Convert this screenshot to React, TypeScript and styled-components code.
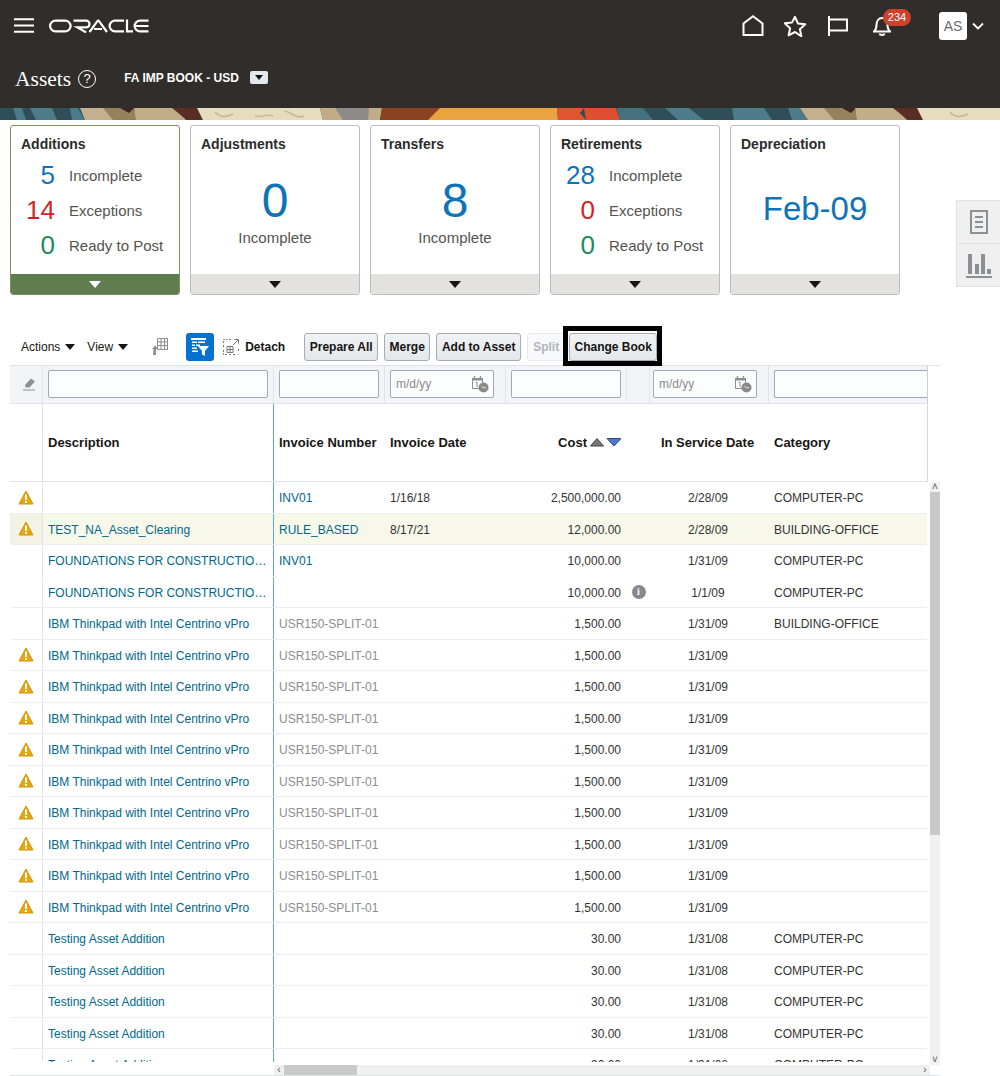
import React from 'react';
import { styled, createGlobalStyle } from 'styled-components';

const GRID = '33px 231px 111px 121px 121px 23px 119px 1fr';
const LINK = '#00688c';

type RowData = {
  warn?: boolean;
  desc: string;
  invoice?: string;
  muted?: boolean;
  date?: string;
  cost: string;
  info?: boolean;
  service: string;
  category?: string;
  selected?: boolean;
  noLine?: boolean;
};

const IBM = 'IBM Thinkpad with Intel Centrino vPro';
const FND = 'FOUNDATIONS FOR CONSTRUCTIO…';
const ibmRow: RowData = { warn: true, desc: IBM, invoice: 'USR150-SPLIT-01', muted: true, cost: '1,500.00', service: '1/31/09' };
const testRow: RowData = { desc: 'Testing Asset Addition', cost: '30.00', service: '1/31/08', category: 'COMPUTER-PC' };

const rows: RowData[] = [
  { warn: true, desc: '', invoice: 'INV01', date: '1/16/18', cost: '2,500,000.00', service: '2/28/09', category: 'COMPUTER-PC' },
  { warn: true, desc: 'TEST_NA_Asset_Clearing', invoice: 'RULE_BASED', date: '8/17/21', cost: '12,000.00', service: '2/28/09', category: 'BUILDING-OFFICE', selected: true },
  { desc: FND, invoice: 'INV01', cost: '10,000.00', service: '1/31/09', category: 'COMPUTER-PC', noLine: true },
  { desc: FND, cost: '10,000.00', info: true, service: '1/1/09', category: 'COMPUTER-PC' },
  { ...ibmRow, warn: false, category: 'BUILDING-OFFICE' },
  ibmRow, ibmRow, ibmRow, ibmRow, ibmRow, ibmRow, ibmRow, ibmRow, ibmRow,
  testRow, testRow, testRow, testRow, testRow,
];

function Warning() {
  return (
    <svg width="16" height="15" viewBox="0 0 16 15">
      <path d="M8 1 15 14H1Z" fill="#e8a70c" stroke="#d19500" strokeLinejoin="round" />
      <rect x="7" y="4.5" width="2" height="5.5" fill="#fff" />
      <rect x="7" y="11" width="2" height="2" fill="#fff" />
    </svg>
  );
}

function CalendarClock() {
  return (
    <svg width="18" height="18" viewBox="0 0 18 18">
      <path d="M1.5 3.5h10v10h-10z" fill="#fff" stroke="#8f8f8f" />
      <path d="M1 3h11v2.5H1z" fill="#8f8f8f" />
      <path d="M3.5 1v2M9.5 1v2" stroke="#8f8f8f" strokeWidth="1.4" />
      <path d="M4.5 7.5 6 7v5" fill="none" stroke="#8f8f8f" />
      <circle cx="12.5" cy="12.5" r="5" fill="#8a8a8a" />
      <path d="M10.500 11.500l2 1.200h2.500" fill="none" stroke="#e8e8e8" />
    </svg>
  );
}

function SummaryCard({ title, active, children }: { title: string; active?: boolean; children: React.ReactNode }) {
  return (
    <Card $active={active}>
      <CardTitle>{title}</CardTitle>
      <CardBody>{children}</CardBody>
      <CardFooter $active={active}>
        <Caret $active={active} />
      </CardFooter>
    </Card>
  );
}

function Stat({ value, label, color }: { value: number; label: string; color: string }) {
  return (
    <StatRow>
      <StatValue $color={color}>{value}</StatValue>
      <StatLabel>{label}</StatLabel>
    </StatRow>
  );
}

export default function App() {
  return (
    <>
      <GlobalStyle />
      <Header>
        <TopBar>
          <svg width="20" height="15" viewBox="0 0 20 15">
            <path d="M0 1.2h20M0 7.5h20M0 13.8h20" stroke="#fff" strokeWidth="2" />
          </svg>
          <Logo width="100" height="14" viewBox="0 0 100 14" role="img" aria-label="Oracle" fill="none" stroke="#fff" strokeWidth="2.2">
            <rect x="1.1" y="1.6" width="20.5" height="10.8" rx="5.4" />
            <path d="M24.5 1.6h12.6a3.3 3.3 0 0 1 0 6.8H28.4l8.8 5" />
            <path d="M40.5 13 48.2 2.4q1-1.4 2 0L58 13M45 10h8" />
            <path d="M75 1.6H66a5.4 5.4 0 0 0 0 10.8h9" />
            <path d="M78 .5V12.4h6" />
            <path d="M99.5 1.6H91a5.4 5.4 0 0 0 0 10.8h8.5M86.500 7h13" />
          </Logo>
          <NavIcons>
            <svg width="22" height="21" viewBox="0 0 22 21" fill="none" stroke="#fff" strokeWidth="2">
              <path d="M1.500 20V8.500L11 1.300l9.500 7.200V20z" />
            </svg>
            <svg width="24" height="22" viewBox="1 0 24 22" fill="none" stroke="#fff" strokeWidth="2" strokeLinejoin="round">
              <path d="m12 1.800 3 6.700 7.300.8-5.400 4.900 1.500 7.100L12 17l-6.400 3.300 1.500-7.100-5.400-4.900 7.300-.8z" />
            </svg>
            <svg width="20" height="20" viewBox="0 0 20 20" fill="none" stroke="#fff" strokeWidth="2">
              <path d="M1 0v20M1 3.500h18v11H1" />
            </svg>
            <BellWrap>
              <svg width="18" height="20" viewBox="0 0 18 20" fill="none" stroke="#fff" strokeWidth="2">
                <path d="M1 15.500h16c-2-1.500-2.500-3-2.500-6.500 0-4-2.300-7-5.500-7S3.500 5 3.500 9c0 3.500-.5 5-2.500 6.500z" />
                <path d="M6.500 17.500c.5 2 4.500 2 5 0" />
              </svg>
              <Badge>234</Badge>
            </BellWrap>
          </NavIcons>
          <Avatar>AS</Avatar>
          <svg width="12" height="8" viewBox="0 0 12 8" fill="none" stroke="#fff" strokeWidth="1.800">
            <path d="m1 1.500 5 5 5-5" />
          </svg>
        </TopBar>
        <TitleBar>
          <PageTitle>Assets</PageTitle>
          <HelpIcon>?</HelpIcon>
          <BookName>FA IMP BOOK - USD</BookName>
          <BookButton>
            <svg width="8" height="5" viewBox="0 0 8 5">
              <path d="M0 0h8L4 5z" fill="#111" />
            </svg>
          </BookButton>
        </TitleBar>
      </Header>

      <Banner viewBox="0 0 1000 12" preserveAspectRatio="none">
        <rect width="1000" height="12" fill="#2f4e57" />
        <path d="M13 0h9l4 12h-9zM30 0h22l5 12H36zM70 0h8l7 12H72z" fill="#4d7b89" />
        <path d="M80 0h45l10 12H85z" fill="#c4b08e" />
        <path d="M103 0h30l5 12h-25z" fill="#97815c" />
        <path d="M120 0h14l-5 5z" fill="#3a2723" />
        <path d="M134 0h40l12 12h-50z" fill="#c3ad86" />
        <path d="M172 0h25l5 12h-15z" fill="#5a2d25" />
        <path d="M197 0h123l3 12H203z" fill="#e6dcc0" />
        <path d="M215 4c5 6 12 5 18 2M255 8c10 2 12-3 18 0M285 3c8 2 10 8 19 5" stroke="#c4b594" strokeWidth="1.500" fill="none" />
        <path d="M320 0h62l-2 12h-57z" fill="#c2ac85" />
        <path d="M335 0h34l-1 12h-25z" fill="#8d8a88" />
        <path d="M382 0h60l-12 12h-50z" fill="#8a4220" />
        <path d="M440 0h117l1 12H428z" fill="#eaa33f" />
        <path d="M557 0h27l-4 5 6 7h-28z" fill="#e0552f" />
        <path d="M584 0h32l4 12h-34z" fill="#dd4f2e" />
        <path d="M617 0h26l10 12h-33z" fill="#45707e" />
        <path d="M665 0h24l15 12h-26zM732 0h32l8 12h-38zM788 0h12l8 12h-16z" fill="#4d7b89" />
        <path d="M800 0h40l10 12h-42z" fill="#c4b08e" />
        <path d="M824 0h30l5 12h-25z" fill="#97815c" />
        <path d="M842 0h14l-5 5z" fill="#3a2723" />
        <path d="M855 0h40l12 12h-50z" fill="#c3ad86" />
        <path d="M893 0h25l5 12h-15z" fill="#5a2d25" />
        <path d="M917 0h83v12h-77z" fill="#e6dcc0" />
        <path d="M950 4c5 6 12 5 18 2" stroke="#c4b594" strokeWidth="1.500" fill="none" />
      </Banner>

      <CardsRow>
        <SummaryCard title="Additions" active>
          <Stat value={5} label="Incomplete" color="#0f73b8" />
          <Stat value={14} label="Exceptions" color="#d31f26" />
          <Stat value={0} label="Ready to Post" color="#1f8a5a" />
        </SummaryCard>
        <SummaryCard title="Adjustments">
          <BigValue>0</BigValue>
          <BigLabel>Incomplete</BigLabel>
        </SummaryCard>
        <SummaryCard title="Transfers">
          <BigValue>8</BigValue>
          <BigLabel>Incomplete</BigLabel>
        </SummaryCard>
        <SummaryCard title="Retirements">
          <Stat value={28} label="Incomplete" color="#0f73b8" />
          <Stat value={0} label="Exceptions" color="#d31f26" />
          <Stat value={0} label="Ready to Post" color="#1f8a5a" />
        </SummaryCard>
        <SummaryCard title="Depreciation">
          <PeriodValue>Feb-09</PeriodValue>
        </SummaryCard>
        <SideTabs>
          <SideTab>
            <svg width="18" height="24" viewBox="0 0 18 24" fill="none" stroke="#8a9096" strokeWidth="2">
              <path d="M1 1h16v22H1zM5 7h8M5 12h8M5 17h8" />
            </svg>
          </SideTab>
          <SideTab>
            <svg width="26" height="26" viewBox="0 0 26 26" fill="#8a9096">
              <path d="M2 2h4v20H2zM9 12h4v10H9zM15 2h4v20h-4zM21 17h4v5h-4zM0 24h26v2H0z" />
            </svg>
          </SideTab>
        </SideTabs>
      </CardsRow>

      <Toolbar>
        <Menu>Actions</Menu>
        <MenuCaret />
        <Menu $gap>View</Menu>
        <MenuCaret />
        <FreezeIcon width="16" height="18" viewBox="0 0 16 18" fill="none" stroke="#8f8f8f">
          <path d="M5.500 .5h10v11h-10zM5.500 4h10M5.500 7.500h10M9 .5v11M12.500 .5v11" />
          <path d="M1 17h3v-6h2.500L3 7.500 0 11h1.500" fill="#8f8f8f" stroke="none" />
        </FreezeIcon>
        <FilterToggle>
          <svg width="18" height="18" viewBox="0 0 18 18" fill="#fff">
            <path d="M0 0h15v2H0zM1 3.500h5v1.500H1zM7 3.500h7v1.500H7zM1 6.500h3v1.500H1zM5 6.500h4v1.500H5zM1 9.500h5v1.500H1zM1 12.500h6v1.500H1z" />
            <path d="M7 8h11l-4 5v5l-3-1.500V13z" />
          </svg>
        </FilterToggle>
        <DetachIcon width="16" height="16" viewBox="0 0 16 16" fill="none" stroke="#777">
          <path d="M.5 4V.5H4M6 .5h2M.5 6v2M.5 11v4.500H4M6 15.500h2M10 15.500h2M15.500 10v2M15.500 15v.5H15" strokeDasharray="2 1" />
          <path d="M10 6l5-5M11.500 .5h4v4" />
          <path d="M4 7.500h6v6H4zM4 10.500h6M7 7.500v6" />
        </DetachIcon>
        <DetachLabel>Detach</DetachLabel>
        <ActionButton $width={74} $gap={19}>Prepare All</ActionButton>
        <ActionButton $width={46}>Merge</ActionButton>
        <ActionButton $width={85}>Add to Asset</ActionButton>
        <ActionButton $width={38} disabled>Split</ActionButton>
        <HighlightedButton $width={88} $gap={4}>Change Book</HighlightedButton>
      </Toolbar>

      <TableFrame>
        <FilterRow>
          <FilterCell $center>
            <svg width="14" height="14" viewBox="0 0 14 14" fill="#8f8f8f">
              <path d="M3 8 9 1.500 13 4.500 7.500 10.500H3.500zM1 12.500h12v1H1z" />
            </svg>
          </FilterCell>
          <FilterCell $right={5}>
            <FilterInput aria-label="Description" />
          </FilterCell>
          <FilterCell $right={5} $line>
            <FilterInput aria-label="Invoice Number" />
          </FilterCell>
          <FilterCell $right={11}>
            <DateField>
              <DateInput placeholder="m/d/yy" aria-label="Invoice Date" />
              <CalendarClock />
            </DateField>
          </FilterCell>
          <FilterCell $right={5}>
            <FilterInput aria-label="Cost" />
          </FilterCell>
          <FilterCell />
          <FilterCell $left={3} $right={11}>
            <DateField>
              <DateInput placeholder="m/d/yy" aria-label="In Service Date" />
              <CalendarClock />
            </DateField>
          </FilterCell>
          <CategoryFilter>
            <FilterInput aria-label="Category" />
          </CategoryFilter>
        </FilterRow>

        <HeaderRow>
          <HeadCell $divider />
          <HeadCell $blue>Description</HeadCell>
          <HeadCell>Invoice Number</HeadCell>
          <HeadCell>Invoice Date</HeadCell>
          <CostHead>
            Cost
            <svg width="31" height="9" viewBox="0 0 31 9">
              <path d="M7 .5 13.500 8H.5z" fill="#777" stroke="#444" />
              <path d="M17 .5h14L24 8z" fill="#4f78c4" stroke="#2c4a86" />
            </svg>
          </CostHead>
          <HeadCell />
          <ServiceHead>In Service Date</ServiceHead>
          <HeadCell>Category</HeadCell>
        </HeaderRow>

        <BodyArea>
          <BodyScroll>
            {rows.map((row, i) => (
              <Row key={i} $selected={row.selected} $noLine={row.noLine}>
                <SelectCell $selected={row.selected}>{row.warn && <Warning />}</SelectCell>
                <DescCell>{row.desc}</DescCell>
                <Cell $muted={row.muted} $link={!row.muted}>
                  {row.invoice}
                </Cell>
                <Cell>{row.date}</Cell>
                <CostCell>{row.cost}</CostCell>
                <InfoCell>{row.info && <InfoDot>i</InfoDot>}</InfoCell>
                <ServiceCell>{row.service}</ServiceCell>
                <Cell>{row.category}</Cell>
              </Row>
            ))}
          </BodyScroll>
          <VScroll>
            <ScrollArrow>˄</ScrollArrow>
            <VThumb />
            <ScrollArrow $end>˅</ScrollArrow>
          </VScroll>
        </BodyArea>

        <HScroll>
          <ScrollArrow>‹</ScrollArrow>
          <HThumb />
          <ScrollArrow $end>›</ScrollArrow>
        </HScroll>
      </TableFrame>
    </>
  );
}

const GlobalStyle = createGlobalStyle`
  html, body {
    margin: 0;
    height: 1076px;
    overflow: hidden;
    background: #fff;
    font-family: "Liberation Sans", Arial, sans-serif;
    color: #333;
  }
  * { box-sizing: border-box; }
`;

const Header = styled.header`
  height: 108px;
  background: #312d2a;
  color: #fff;
`;

const TopBar = styled.div`
  height: 50px;
  padding: 1px 16px 0 14px;
  display: flex;
  align-items: center;
`;

const Logo = styled.svg`
  margin-left: 15px;
`;

const NavIcons = styled.div`
  margin-left: auto;
  display: flex;
  align-items: center;
  gap: 20px;
`;

const BellWrap = styled.div`
  position: relative;
  width: 18px;
  height: 20px;
  margin: 0 48px 0 5px;
`;

const Badge = styled.span`
  position: absolute;
  left: 10px;
  top: -7px;
  width: 28px;
  height: 17px;
  border-radius: 9px;
  background: #d0412b;
  color: #fff;
  font-size: 11px;
  line-height: 17px;
  text-align: center;
`;

const Avatar = styled.div`
  width: 28px;
  height: 28px;
  margin-right: 5px;
  border-radius: 3px;
  background: #fff;
  color: #6b6b6b;
  font-size: 14px;
  line-height: 28px;
  text-align: center;
`;

const TitleBar = styled.div`
  height: 58px;
  padding-left: 15px;
  display: flex;
  align-items: center;
`;

const PageTitle = styled.h1`
  margin: 0;
  font: 400 21.5px "Liberation Serif", Georgia, serif;
`;

const HelpIcon = styled.span`
  width: 18px;
  height: 18px;
  margin-left: 7px;
  border: 1px solid #fff;
  border-radius: 50%;
  font-size: 13px;
  line-height: 16px;
  text-align: center;
`;

const BookName = styled.span`
  margin: -2px 0 0 28px;
  font-size: 12px;
  font-weight: 700;
`;

const BookButton = styled.span`
  width: 18px;
  height: 13px;
  margin: -3px 0 0 11px;
  border-radius: 2px;
  background: #e4e8ef;
  display: flex;
  align-items: center;
  justify-content: center;
`;

const Banner = styled.svg`
  display: block;
  width: 100%;
  height: 12px;
`;

const CardsRow = styled.section`
  height: 170px;
  margin-top: 5px;
  padding-left: 10px;
  display: flex;
  gap: 10px;
`;

const Card = styled.article<{ $active?: boolean }>`
  width: 170px;
  height: 170px;
  border: 1px solid ${p => (p.$active ? '#7b9160' : '#bcbcba')};
  border-radius: 3px;
  display: flex;
  flex-direction: column;
  overflow: hidden;
`;

const CardTitle = styled.h2`
  margin: 0;
  padding: 10px 10px 0;
  height: 28px;
  font-size: 14px;
  line-height: 16px;
  color: #2b2b2b;
`;

const CardBody = styled.div`
  flex: 1;
`;

const CardFooter = styled.div<{ $active?: boolean }>`
  height: 20px;
  background: ${p => (p.$active ? '#5f7d4f' : '#e3e2de')};
  display: flex;
  align-items: center;
  justify-content: center;
`;

const Caret = styled.span<{ $active?: boolean }>`
  border-style: solid;
  border-width: 7px 6.5px 0;
  border-color: ${p => (p.$active ? '#fff' : '#161513')} transparent transparent;
`;

const StatRow = styled.div`
  height: 35px;
  display: grid;
  grid-template-columns: 44px 1fr;
  column-gap: 14px;
  align-items: center;
  &:first-child { margin-top: 4px; }
`;

const StatValue = styled.span<{ $color: string }>`
  font-size: 26px;
  color: ${p => p.$color};
  text-align: right;
`;

const StatLabel = styled.span`
  font-size: 15px;
  color: #55534f;
`;

const BigValue = styled.div`
  margin-top: 20px;
  font-size: 48px;
  line-height: 54px;
  color: #0f73b8;
  text-align: center;
`;

const BigLabel = styled.div`
  margin-top: 1px;
  font-size: 15px;
  line-height: 18px;
  color: #55534f;
  text-align: center;
`;

const PeriodValue = styled.div`
  margin-top: 35px;
  font-size: 33px;
  line-height: 40px;
  color: #0f73b8;
  text-align: center;
`;

const SideTabs = styled.aside`
  width: 44px;
  height: 87px;
  margin: 75px 0 0 auto;
  display: flex;
  flex-direction: column;
  border: 1px solid #dfe1e3;
  border-right: 0;
`;

const SideTab = styled.div`
  flex: 1;
  background: #efefef;
  display: flex;
  align-items: center;
  justify-content: center;
  & + & { border-top: 1px solid #dfe1e3; }
`;

const Toolbar = styled.div`
  height: 28px;
  margin-top: 38px;
  padding-left: 21px;
  display: flex;
  align-items: center;
  font-size: 12px;
`;

const Menu = styled.span<{ $gap?: boolean }>`
  color: #161513;
  margin-left: ${p => (p.$gap ? '12px' : '0')};
`;

const MenuCaret = styled.span`
  margin-left: 5px;
  border-style: solid;
  border-width: 6px 5px 0;
  border-color: #161513 transparent transparent;
`;

const FreezeIcon = styled.svg`
  margin-left: 24px;
`;

const FilterToggle = styled.span`
  width: 28px;
  height: 28px;
  margin-left: 18px;
  border-radius: 3px;
  background: #0572ce;
  display: flex;
  align-items: center;
  justify-content: center;
`;

const DetachIcon = styled.svg`
  margin-left: 9px;
`;

const DetachLabel = styled.span`
  margin-left: 6px;
  font-weight: 700;
  color: #161513;
`;

const ActionButton = styled.button<{ $width: number; $gap?: number }>`
  width: ${p => p.$width}px;
  height: 28px;
  margin-left: ${p => p.$gap ?? 6}px;
  padding: 0;
  white-space: nowrap;
  border: 1px solid ${p => (p.disabled ? '#e6e8ea' : '#a3adb6')};
  border-radius: 3px;
  background: ${p => (p.disabled ? '#f8f9fa' : 'linear-gradient(#f0f2f4, #e4e8ea)')};
  color: ${p => (p.disabled ? '#b0b4b8' : '#161513')};
  font: 700 12px "Liberation Sans", Arial, sans-serif;
`;

const HighlightedButton = styled(ActionButton)`
  position: relative;
  &::after {
    content: '';
    position: absolute;
    inset: -8px -6px -6px -7px;
    border: 5px solid #000;
  }
`;

const TableFrame = styled.section`
  width: 930px;
  margin: 4px 0 0 10px;
  border-top: 1px solid #dfe4ea;
  border-bottom: 1px solid #dfe4ea;
`;

const FilterRow = styled.div`
  width: 918px;
  height: 38px;
  display: grid;
  grid-template-columns: ${GRID};
  background: #f1f3f6;
  border-bottom: 1px solid #dfe4ea;
`;

const FilterCell = styled.div<{ $center?: boolean; $line?: boolean; $left?: number; $right?: number }>`
  padding: 0 ${p => p.$right ?? 0}px 1px ${p => p.$left ?? 5}px;
  display: flex;
  align-items: center;
  justify-content: ${p => (p.$center ? 'center' : 'flex-start')};
  border-right: 1px solid #e2e6ea;
  min-width: 0;
`;

const CategoryFilter = styled(FilterCell)`
  overflow: hidden;
  border-right: 1px solid #c9cfd4;
  padding-right: 0;
  input { width: 175px; flex: none; border-right: 0; }
`;

const FilterInput = styled.input`
  width: 100%;
  height: 28px;
  border: 1px solid #9aabb7;
  border-radius: 2px;
  background: #fcfdfe;
  outline: none;
`;

const DateField = styled.div`
  width: 100%;
  height: 28px;
  padding: 0 4px 0 5px;
  border: 1px solid #9aabb7;
  border-radius: 2px;
  background: #fcfdfe;
  display: flex;
  align-items: center;
`;

const DateInput = styled.input`
  width: 72px;
  flex: 1;
  min-width: 0;
  padding: 0;
  border: 0;
  background: none;
  outline: none;
  font: 12px "Liberation Sans", Arial, sans-serif;
  &::placeholder { color: #8a8a8a; opacity: 1; }
`;

const HeaderRow = styled.div`
  width: 918px;
  height: 78px;
  display: grid;
  grid-template-columns: ${GRID};
  border-bottom: 1px solid #dfe4ea;
  border-right: 1px solid #d5d9dd;
  font-size: 13px;
  font-weight: 700;
  color: #161513;
`;

const HeadCell = styled.div<{ $divider?: boolean; $blue?: boolean }>`
  padding-left: 5px;
  display: flex;
  align-items: center;
  white-space: nowrap;
  border-right: 1px solid ${p => (p.$blue ? '#5aacc8' : p.$divider ? '#dfe4ea' : 'transparent')};
`;

const CostHead = styled(HeadCell)`
  justify-content: flex-end;
  padding-right: 5px;
  gap: 3px;
`;

const ServiceHead = styled(HeadCell)`
  justify-content: center;
  padding: 0 3px 0 0;
`;

const BodyArea = styled.div`
  height: 583px;
  display: flex;
`;

const BodyScroll = styled.div`
  width: 920px;
  height: 580px;
  overflow: hidden;
`;

const Row = styled.div<{ $selected?: boolean; $noLine?: boolean }>`
  width: 917px;
  height: 31.5px;
  display: grid;
  grid-template-columns: ${GRID};
  font-size: 12px;
  background: ${p => (p.$selected ? '#f7f8ea' : '#fff')};
  border-bottom: 1px solid ${p => (p.$noLine ? 'transparent' : '#eceff2')};
`;

const Cell = styled.div<{ $muted?: boolean; $link?: boolean }>`
  padding: 2px 5px 0;
  min-width: 0;
  display: flex;
  align-items: center;
  white-space: nowrap;
  color: ${p => (p.$muted ? '#8d8d8d' : p.$link ? LINK : '#333')};
`;

const SelectCell = styled.div<{ $selected?: boolean }>`
  display: flex;
  align-items: center;
  justify-content: center;
  border-right: 1px solid #dfe4ea;
  background: ${p => (p.$selected ? '#f2f3e3' : 'transparent')};
`;

const DescCell = styled(Cell)`
  color: ${LINK};
  border-right: 1px solid #5aacc8;
`;

const CostCell = styled(Cell)`
  justify-content: flex-end;
  padding-right: 6px;
`;

const InfoCell = styled.div`
  display: flex;
  align-items: center;
  justify-content: center;
`;

const InfoDot = styled.span`
  width: 14px;
  height: 14px;
  border-radius: 50%;
  background: #868a8e;
  color: #fff;
  font: 700 10px/14px "Liberation Serif", serif;
  text-align: center;
`;

const ServiceCell = styled(Cell)`
  justify-content: center;
  padding: 2px 3px 0 0;
`;

const VScroll = styled.div`
  width: 10px;
  background: #f0f0f0;
  display: flex;
  flex-direction: column;
`;

const VThumb = styled.div`
  width: 100%;
  height: 343px;
  background: #c9c9c9;
`;

const ScrollArrow = styled.span<{ $end?: boolean }>`
  width: 10px;
  height: 10px;
  flex: none;
  margin-top: ${p => (p.$end ? 'auto' : '0')};
  margin-left: ${p => (p.$end ? 'auto' : '0')};
  color: #555;
  font-size: 10px;
  line-height: 10px;
  text-align: center;
`;

const HScroll = styled.div`
  width: 656px;
  height: 10px;
  margin-left: 264px;
  background: #f0f0f0;
  display: flex;
  align-items: stretch;
`;

const HThumb = styled.div`
  width: 73px;
  background: #c9c9c9;
`;
